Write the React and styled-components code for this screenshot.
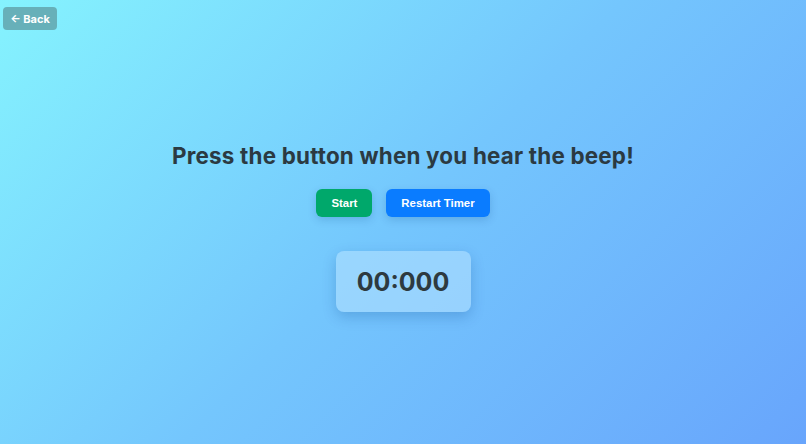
import React from 'react';
import styled, { createGlobalStyle } from 'styled-components';

const GlobalStyle = createGlobalStyle`
  html, body {
    margin: 0;
    padding: 0;
  }
  body {
    font-family: 'Inter', 'Liberation Sans', sans-serif;
  }
`;

const Page = styled.div`
  position: relative;
  width: 100%;
  height: 100vh;
  box-sizing: border-box;
  padding-top: 10px;
  display: flex;
  flex-direction: column;
  align-items: center;
  justify-content: center;
  background: linear-gradient(135deg, #85f3fe 0%, #74c6fd 50%, #68a5fc 100%);
  overflow: hidden;
`;

const BackButton = styled.button`
  position: absolute;
  top: 7px;
  left: 3px;
  width: 54px;
  height: 23px;
  border: none;
  border-radius: 4px;
  background: #67b0b9;
  color: #fff;
  font-family: 'Inter', sans-serif;
  font-weight: 700;
  font-size: 11px;
  cursor: pointer;
  padding: 0;
`;

const Heading = styled.h1`
  margin: 0 0 20px;
  font-family: 'Inter', 'Noto Sans', sans-serif;
  font-weight: 700;
  font-size: 22.4px;
  letter-spacing: 0.2px;
  color: #2b3a42;
`;

const Controls = styled.div`
  display: flex;
  gap: 14px;
  margin-bottom: 34px;
`;

const ActionButton = styled.button`
  height: 28px;
  padding: 0 15px;
  border: none;
  border-radius: 6px;
  background: ${p => p.$bg};
  color: #fff;
  font-family: 'Liberation Sans', Arial, sans-serif;
  font-weight: 700;
  font-size: 11.4px;
  box-shadow: 0 3px 8px rgba(0, 60, 120, 0.18);
  cursor: pointer;
`;

const TimerBox = styled.div`
  width: 135px;
  height: 61px;
  display: flex;
  align-items: center;
  justify-content: center;
  border-radius: 8px;
  background: rgba(190, 230, 255, 0.5);
  box-shadow: 0 5px 14px rgba(0, 60, 130, 0.22);
  font-family: 'Inter', sans-serif;
  font-weight: 700;
  font-size: 25px;
  color: #2e3a40;
`;

export default function App() {
  return (
    <>
      <GlobalStyle />
      <Page>
        <BackButton>← Back</BackButton>
        <Heading>Press the button when you hear the beep!</Heading>
        <Controls>
          <ActionButton $bg="#00a86b">Start</ActionButton>
          <ActionButton $bg="#0a7cff">Restart Timer</ActionButton>
        </Controls>
        <TimerBox>00:000</TimerBox>
      </Page>
    </>
  );
}
